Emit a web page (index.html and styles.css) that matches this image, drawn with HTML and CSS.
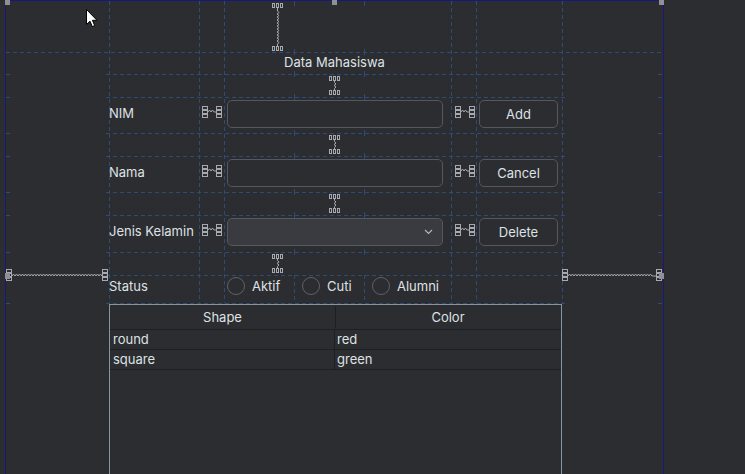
FILE: index.html
```html
<!DOCTYPE html>
<html>
<head>
<meta charset="utf-8">
<title>Form Designer</title>
<link rel="stylesheet" href="styles.css">
</head>
<body>
<svg class="defs" width="0" height="0" aria-hidden="true">
  <defs>
    <g id="hbox" fill="none" stroke="#a6a9af" stroke-width="1">
      <rect x="0.5" y="0.5" width="5" height="3"/>
      <rect x="0.5" y="4.5" width="5" height="3"/>
      <rect x="0.5" y="8.5" width="5" height="3"/>
    </g>
    <g id="vbox" fill="none" stroke="#a6a9af" stroke-width="1">
      <rect x="0.5" y="0.5" width="2" height="4"/>
      <rect x="4.5" y="0.5" width="2" height="4"/>
      <rect x="8.5" y="0.5" width="2" height="4"/>
    </g>
    <path id="hzz" d="M5.5 6 L6 6 l1.5 -2 1.5 2 1.5 -2 1.5 2 L14.5 6" fill="none" stroke="#a6a9af" stroke-width="1"/>
    <path id="vzz" d="M5.5 5 V6.5 l1.5 1.5 -2 1.5 2 1.5 -1.5 1.5 V14" fill="none" stroke="#a6a9af" stroke-width="1"/>
  </defs>
</svg>

<div class="page">
  <div class="gutter"></div>

  <div class="form">
    <!-- guide lines -->
    <div class="hl full r2"></div>
    <div class="hl part r3"></div>
    <div class="hl part r4"></div>
    <div class="hl part r5"></div>
    <div class="hl part r6"></div>
    <div class="hl part r7"></div>
    <div class="hl part r8"></div>
    <div class="hl part r9"></div>
    <div class="hl part r10"></div>
    <div class="hl part r11"></div>

    <div class="vl c2"></div>
    <div class="vl c3"></div>
    <div class="vl c4"></div>
    <div class="vl c7"></div>
    <div class="vl c8"></div>
    <div class="vl c9"></div>
    <div class="vt c5"></div>
    <div class="vt c6"></div>
    <div class="vs c5"></div>
    <div class="vs c6"></div>

    <!-- vertical springs -->
    <svg class="vspring-long" width="11" height="48" viewBox="0 0 11 48">
      <use href="#vbox"/>
      <path d="M5.5 5 V8 l1.5 1.5 -2 1.5 2 1.5 -2 1.5 2 1.5 -2 1.5 2 1.5 -2 1.5 2 1.5 -2 1.5 2 1.5 -2 1.5 2 1.5 -2 1.5 2 1.5 -2 1.5 2 1.5 -2 1.5 2 1.5 -2 1.5 2 1.5 -1.5 1.5 V43" fill="none" stroke="#a6a9af" stroke-width="1"/>
      <use href="#vbox" y="43"/>
    </svg>

    <svg class="vspring g3" width="11" height="19" viewBox="0 0 11 19">
      <use href="#vbox"/><use href="#vzz"/><use href="#vbox" y="14"/>
    </svg>
    <svg class="vspring g5" width="11" height="19" viewBox="0 0 11 19">
      <use href="#vbox"/><use href="#vzz"/><use href="#vbox" y="14"/>
    </svg>
    <svg class="vspring g7" width="11" height="19" viewBox="0 0 11 19">
      <use href="#vbox"/><use href="#vzz"/><use href="#vbox" y="14"/>
    </svg>
    <svg class="vspring g9" width="11" height="19" viewBox="0 0 11 19">
      <use href="#vbox"/><use href="#vzz"/><use href="#vbox" y="14"/>
    </svg>

    <!-- title -->
    <div class="title">Data Mahasiswa</div>

    <!-- NIM row -->
    <div class="lbl r4">NIM</div>
    <svg class="hspring a r4" width="20" height="13" viewBox="0 0 20 13">
      <use href="#hbox"/><use href="#hzz"/><use href="#hbox" x="14"/>
    </svg>
    <div class="field r4"></div>
    <svg class="hspring b r4" width="20" height="13" viewBox="0 0 20 13">
      <use href="#hbox"/><use href="#hzz"/><use href="#hbox" x="14"/>
    </svg>
    <div class="btn r4">Add</div>

    <!-- Nama row -->
    <div class="lbl r6">Nama</div>
    <svg class="hspring a r6" width="20" height="13" viewBox="0 0 20 13">
      <use href="#hbox"/><use href="#hzz"/><use href="#hbox" x="14"/>
    </svg>
    <div class="field r6"></div>
    <svg class="hspring b r6" width="20" height="13" viewBox="0 0 20 13">
      <use href="#hbox"/><use href="#hzz"/><use href="#hbox" x="14"/>
    </svg>
    <div class="btn r6">Cancel</div>

    <!-- Jenis Kelamin row -->
    <div class="lbl r8">Jenis Kelamin</div>
    <svg class="hspring a r8" width="20" height="13" viewBox="0 0 20 13">
      <use href="#hbox"/><use href="#hzz"/><use href="#hbox" x="14"/>
    </svg>
    <div class="field combo r8">
      <svg class="chev" width="9" height="6" viewBox="0 0 9 6"><path d="M1 1 L4.5 4.5 L8 1" fill="none" stroke="#b4b7bd" stroke-width="1.1"/></svg>
    </div>
    <svg class="hspring b r8" width="20" height="13" viewBox="0 0 20 13">
      <use href="#hbox"/><use href="#hzz"/><use href="#hbox" x="14"/>
    </svg>
    <div class="btn r8">Delete</div>

    <!-- horizontal long springs -->
    <svg class="hspring-long left" width="103" height="12" viewBox="0 0 103 12">
      <use href="#hbox"/>
      <path d="M5.5 7 H6 l1.5 -2 1.5 2 1.5 -2 1.5 2 1.5 -2 1.5 2 1.5 -2 1.5 2 1.5 -2 1.5 2 1.5 -2 1.5 2 1.5 -2 1.5 2 1.5 -2 1.5 2 1.5 -2 1.5 2 1.5 -2 1.5 2 1.5 -2 1.5 2 1.5 -2 1.5 2 1.5 -2 1.5 2 1.5 -2 1.5 2 1.5 -2 1.5 2 1.5 -2 1.5 2 1.5 -2 1.5 2 1.5 -2 1.5 2 1.5 -2 1.5 2 1.5 -2 1.5 2 1.5 -2 1.5 2 1.5 -2 1.5 2 1.5 -2 1.5 2 1.5 -2 1.5 2 1.5 -2 1.5 2 1.5 -2 1.5 2 1.5 -2 1.5 2 1.5 -2 1.5 2 1.5 -2 1.5 2 1.5 -2 1.5 2 H96.5" fill="none" stroke="#a6a9af" stroke-width="1"/>
      <use href="#hbox" x="96"/>
    </svg>
    <svg class="hspring-long right" width="100" height="12" viewBox="0 0 100 12">
      <use href="#hbox"/>
      <path d="M5.5 7 H6 l1.5 -2 1.5 2 1.5 -2 1.5 2 1.5 -2 1.5 2 1.5 -2 1.5 2 1.5 -2 1.5 2 1.5 -2 1.5 2 1.5 -2 1.5 2 1.5 -2 1.5 2 1.5 -2 1.5 2 1.5 -2 1.5 2 1.5 -2 1.5 2 1.5 -2 1.5 2 1.5 -2 1.5 2 1.5 -2 1.5 2 1.5 -2 1.5 2 1.5 -2 1.5 2 1.5 -2 1.5 2 1.5 -2 1.5 2 1.5 -2 1.5 2 1.5 -2 1.5 2 1.5 -2 1.5 2 1.5 -2 1.5 2 1.5 -2 1.5 2 1.5 -2 1.5 2 1.5 -2 1.5 2 1.5 -2 1.5 2 1.5 -2 1.5 2 1.5 -2 1.5 2 H94.5" fill="none" stroke="#a6a9af" stroke-width="1"/>
      <use href="#hbox" x="94"/>
    </svg>

    <!-- Status row -->
    <div class="status">Status</div>
    <div class="radio ra"><span class="dot"></span>Aktif</div>
    <div class="radio rb"><span class="dot"></span>Cuti</div>
    <div class="radio rc"><span class="dot"></span>Alumni</div>

    <!-- table -->
    <div class="table">
      <div class="th first">Shape</div>
      <div class="th">Color</div>
      <div class="td first">round</div>
      <div class="td">red</div>
      <div class="td first">square</div>
      <div class="td">green</div>
    </div>
  </div>

  <div class="side"></div>

  <!-- selection handles -->
  <span class="handle h1"></span>
  <span class="handle h2"></span>
  <span class="handle h3"></span>
  <span class="handle h4"></span>
  <span class="handle h5"></span>

  <svg class="cursor" width="12" height="19" viewBox="0 0 12 19">
    <path d="M0.5 0.5 L0.5 15.5 L4 12.2 L6.3 17.6 L8.7 16.6 L6.4 11.3 L11 11.3 Z" fill="#ffffff" stroke="#000000" stroke-width="1" stroke-linejoin="miter"/>
  </svg>
</div>
</body>
</html>
```

FILE: styles.css
```css
* { box-sizing: border-box; margin: 0; padding: 0; }

html, body {
  width: 745px;
  height: 474px;
  overflow: hidden;
  background: #2b2d30;
}

body {
  font-family: Inter, "Noto Sans", "DejaVu Sans", sans-serif;
  font-size: 13px;
  color: #dfe1e5;
}

.defs { position: absolute; width: 0; height: 0; }

.page {
  position: relative;
  display: flex;
  width: 745px;
  height: 474px;
}

.gutter { width: 5px; flex: none; }
.side { flex: 1; background: #2b2d30; }

.form {
  flex: none;
  width: 659px;
  height: 474px;
  overflow: hidden;
  border-top: 1px solid #17177c;
  border-left: 1px solid #17177c;
  border-right: 1px solid #17177c;
  background: #2b2d30;
  display: grid;
  grid-template-columns: 103px 90px 25px 70px 70px 87px 25px 86px 101px;
  grid-template-rows: 51px 22px 23px 36px 23px 36px 23px 37px 23px 28px 1fr;
}

/* ---------- guide lines ---------- */
.hl {
  grid-column: 1 / -1;
  height: 1px;
  align-self: start;
}
.hl.full {
  background: repeating-linear-gradient(to right, #2d4b74 0 4px, transparent 4px 7px);
}
.hl.part {
  background:
    repeating-linear-gradient(to right, #2d4b74 0 4px, transparent 4px 7px) 0 0 / 5px 1px no-repeat,
    repeating-linear-gradient(to right, #2d4b74 0 4px, transparent 4px 7px) 100px 0 / 459px 1px no-repeat,
    repeating-linear-gradient(to right, #2d4b74 0 4px, transparent 4px 7px) right 0 / 5px 1px no-repeat;
}
.r2 { grid-row: 2; }
.r3 { grid-row: 3; }
.r4 { grid-row: 4; }
.r5 { grid-row: 5; }
.r6 { grid-row: 6; }
.r7 { grid-row: 7; }
.r8 { grid-row: 8; }
.r9 { grid-row: 9; }
.r10 { grid-row: 10; }
.r11 { grid-row: 11; }

.vl, .vt, .vs {
  width: 1px;
  justify-self: start;
}
.vl {
  grid-row: 1 / 11;
  background: repeating-linear-gradient(to bottom, #2d4b74 0 4px, transparent 4px 7px);
}
.vt {
  grid-row: 1 / 10;
  background:
    linear-gradient(#2d4b74, #2d4b74) 0 0 / 1px 5px no-repeat,
    linear-gradient(#2d4b74, #2d4b74) 0 48px / 1px 6px no-repeat,
    linear-gradient(#2d4b74, #2d4b74) 0 70px / 1px 6px no-repeat,
    linear-gradient(#2d4b74, #2d4b74) 0 93px / 1px 6px no-repeat,
    linear-gradient(#2d4b74, #2d4b74) 0 129px / 1px 6px no-repeat,
    linear-gradient(#2d4b74, #2d4b74) 0 152px / 1px 6px no-repeat,
    linear-gradient(#2d4b74, #2d4b74) 0 188px / 1px 6px no-repeat,
    linear-gradient(#2d4b74, #2d4b74) 0 211px / 1px 6px no-repeat,
    linear-gradient(#2d4b74, #2d4b74) 0 248px / 1px 6px no-repeat;
}
.vs {
  grid-row: 10;
  background: repeating-linear-gradient(to bottom, #2d4b74 0 4px, transparent 4px 7px);
}
.c2 { grid-column: 2; }
.c3 { grid-column: 3; }
.c4 { grid-column: 4; }
.c5 { grid-column: 5; }
.c6 { grid-column: 6; }
.c7 { grid-column: 7; }
.c8 { grid-column: 8; }
.c9 { grid-column: 9; }

/* ---------- springs ---------- */
.vspring-long {
  grid-column: 4;
  grid-row: 1;
  align-self: start;
  margin-top: 2px;
  margin-left: 48px;
}
.vspring {
  align-self: center;
}
.vspring.g3 { grid-column: 5; grid-row: 3; margin-left: 35px; }
.vspring.g5 { grid-column: 5; grid-row: 5; margin-left: 35px; }
.vspring.g7 { grid-column: 5; grid-row: 7; margin-left: 35px; }
.vspring.g9 { grid-column: 4; grid-row: 9; margin-left: 48px; }

.hspring {
  align-self: start;
  margin-top: 9px;
}
.hspring.a { grid-column: 3; margin-left: 3px; }
.hspring.b { grid-column: 7; margin-left: 4px; }

.hspring-long {
  grid-row: 10;
  align-self: start;
  margin-top: -6px;
}
.hspring-long.left { grid-column: 1; }
.hspring-long.right { grid-column: 9; }

/* ---------- components ---------- */
.title {
  grid-column: 2 / 9;
  grid-row: 2;
  display: flex;
  align-items: center;
  justify-content: center;
  padding-right: 2px;
  padding-bottom: 2px;
}

.lbl {
  grid-column: 2;
  align-self: start;
  margin-top: 2px;
  height: 28px;
  display: flex;
  align-items: center;
  white-space: nowrap;
}

.field {
  grid-column: 4 / 7;
  align-self: start;
  margin: 3px 8px 0 3px;
  height: 28px;
  border: 1px solid #55585e;
  border-radius: 5px;
  background: #2b2d30;
}
.field.combo {
  background: #393b40;
  display: flex;
  align-items: center;
  justify-content: flex-end;
  padding-right: 9px;
}
.chev { display: block; }

.btn {
  grid-column: 8;
  align-self: start;
  margin: 3px 0 0 3px;
  width: 79px;
  height: 28px;
  border: 1px solid #55585e;
  border-radius: 5px;
  background: #2b2d30;
  display: flex;
  align-items: center;
  justify-content: center;
}

.status {
  grid-column: 2;
  grid-row: 10;
  align-self: start;
  height: 22px;
  display: flex;
  align-items: center;
}

.radio {
  grid-row: 10;
  align-self: start;
  margin-top: 2px;
  height: 18px;
  display: flex;
  align-items: center;
  gap: 7px;
  white-space: nowrap;
}
.radio .dot {
  width: 18px;
  height: 18px;
  border: 1px solid #5f6268;
  border-radius: 50%;
  background: #2b2d30;
  flex: none;
}
.radio.ra { grid-column: 4; margin-left: 3px; }
.radio.rb { grid-column: 5; margin-left: 8px; }
.radio.rc { grid-column: 6; margin-left: 8px; }

/* ---------- table ---------- */
.table {
  grid-column: 2 / 9;
  grid-row: 11;
  align-self: start;
  margin-top: 1px;
  height: 200px;
  border: 1px solid #8a93a0;
  display: grid;
  grid-template-columns: 225px 1fr;
  grid-template-rows: 25px 20px 20px;
  align-content: start;
}
.th {
  display: flex;
  align-items: center;
  justify-content: center;
  border-bottom: 1px solid #1e1f22;
  padding-bottom: 1px;
}
.th.first {
  position: relative;
}
.th.first::after {
  content: "";
  position: absolute;
  right: -1px;
  top: 1px;
  bottom: 1px;
  width: 1px;
  background: #1e1f22;
}
.td {
  display: flex;
  align-items: center;
  padding-left: 2px;
  border-bottom: 1px solid #1e1f22;
  padding-bottom: 1px;
}
.td.first {
  padding-left: 3px;
  border-right: 1px solid #1e1f22;
}

/* ---------- overlays ---------- */
.handle {
  position: absolute;
  width: 5px;
  height: 5px;
  background: #8e9095;
}
.h1 { left: 5px; top: 0; }
.h2 { left: 332px; top: 0; }
.h3 { left: 659px; top: 0; }
.h4 { left: 5px; top: 273px; height: 6px; }
.h5 { left: 659px; top: 273px; height: 6px; }

.cursor {
  position: absolute;
  left: 86px;
  top: 9px;
}
```
